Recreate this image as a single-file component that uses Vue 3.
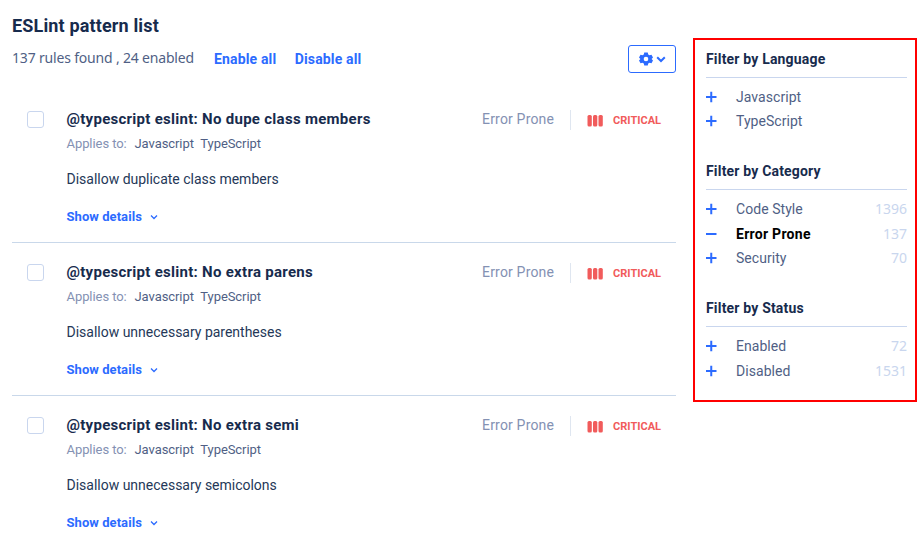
<script setup>
const rules = [
  { title: '@typescript eslint: No dupe class members', text: 'Disallow duplicate class members' },
  { title: '@typescript eslint: No extra parens', text: 'Disallow unnecessary parentheses' },
  { title: '@typescript eslint: No extra semi', text: 'Disallow unnecessary semicolons' },
]
const filters = [
  { title: 'Filter by Language', options: [{ name: 'Javascript' }, { name: 'TypeScript' }] },
  {
    title: 'Filter by Category',
    options: [
      { name: 'Code Style', count: 1396 },
      { name: 'Error Prone', count: 137, active: true },
      { name: 'Security', count: 70 },
    ],
  },
  { title: 'Filter by Status', options: [{ name: 'Enabled', count: 72 }, { name: 'Disabled', count: 1531 }] },
]
</script>

<template>
  <div class="page">
    <main class="main">
      <h1 class="heading">ESLint pattern list</h1>
      <div class="toolbar">
        <span class="summary">137 rules found , 24 enabled</span>
        <a class="link">Enable all</a>
        <a class="link">Disable all</a>
        <button class="settings" aria-label="Settings">
          <svg width="14" height="14" viewBox="0 0 24 24">
            <path fill="currentColor" fill-rule="evenodd" d="M9 1h6l.8 3.400 2.200 1.300 3.400-1 2.600 4.900-2.400 2.400 2.400 2.400-2.600 4.900-3.400-1-2.200 1.300L15 23H9l-.8-3.400L6 18.300l-3.400 1L0 14.400 2.400 12 0 9.600 2.600 4.700l3.400 1 2.200-1.300zM12 8a4 4 0 1 0 0 8 4 4 0 0 0 0-8z" />
          </svg>
          <svg width="10" height="7" viewBox="0 0 10 7">
            <path d="M1.200 1.200L5 5l3.800-3.800" fill="none" stroke="currentColor" stroke-width="2" />
          </svg>
        </button>
      </div>

      <article v-for="rule in rules" :key="rule.title" class="rule">
        <span class="checkbox"></span>
        <div class="body">
          <div class="top">
            <h2 class="title">{{ rule.title }}</h2>
            <span class="category">Error Prone</span>
            <span class="severity">
              <svg width="16" height="12" viewBox="0 0 16 12">
                <g fill="currentColor">
                  <rect x="0.500" y="0" width="4.300" height="11.500" rx="1.500" />
                  <rect x="6" y="0" width="4.300" height="11.500" rx="1.500" />
                  <rect x="11.500" y="0" width="4.300" height="11.500" rx="1.500" />
                </g>
              </svg>
              <span class="level">CRITICAL</span>
            </span>
          </div>
          <div class="applies">
            <span class="label">Applies to:</span>
            <span>Javascript</span>
            <span class="ts">TypeScript</span>
          </div>
          <p class="text">{{ rule.text }}</p>
          <a class="details">
            Show details
            <svg width="8" height="6" viewBox="0 0 8 6">
              <path d="M1 1.500l3 3 3-3" fill="none" stroke="currentColor" stroke-width="1.300" />
            </svg>
          </a>
        </div>
      </article>
    </main>

    <aside class="sidebar">
      <section v-for="group in filters" :key="group.title" class="group">
        <h3 class="group-title">{{ group.title }}</h3>
        <div v-for="option in group.options" :key="option.name" class="option" :class="{ active: option.active }">
          <svg class="sign" width="12" height="12" viewBox="0 0 12 12">
            <path :d="option.active ? 'M0 6h10.500' : 'M0 6h10.500M5.250 0.750v10.500'" stroke="currentColor" stroke-width="2" />
          </svg>
          <span class="name">{{ option.name }}</span>
          <span class="count">{{ option.count }}</span>
        </div>
      </section>
    </aside>
  </div>
</template>

<style>
body {
  background: #fff;
  overflow: hidden;
}
</style>

<style scoped>
.page {
  display: flex;
  align-items: flex-start;
  gap: 17px;
  width: 923px;
  height: 545px;
  overflow: hidden;
  box-sizing: border-box;
  padding-left: 12px;
  font-family: Roboto, sans-serif;
  font-size: 14px;
  color: #172b4d;
}
h1, h2, h3, p { margin: 0; }
.main {
  width: 664px;
  flex: none;
  padding-top: 14px;
}
.heading {
  font-size: 18px;
  line-height: 24px;
  letter-spacing: 0.150px;
}
.toolbar {
  display: flex;
  align-items: flex-start;
  height: 52px;
  padding-top: 7px;
  box-sizing: border-box;
}
.summary {
  width: 202px;
  font-family: "Noto Sans", sans-serif;
  line-height: 26px;
  letter-spacing: -0.180px;
  color: #505f85;
}
.link {
  font-weight: bold;
  line-height: 28px;
  letter-spacing: 0.150px;
  color: #2c6bff;
}
.link + .link { margin-left: 18.500px; }
.settings {
  display: flex;
  align-items: center;
  justify-content: center;
  gap: 3px;
  width: 48px;
  height: 28px;
  margin-left: auto;
  padding: 0;
  border: 1px solid #2c6bff;
  border-radius: 3px;
  background: #fff;
  color: #2c6bff;
}
.rule {
  display: flex;
  box-sizing: border-box;
  height: 153px;
  padding: 19px 15px 0;
  border-bottom: 1px solid #c9d8ea;
}
.checkbox {
  box-sizing: border-box;
  flex: none;
  width: 17px;
  height: 17px;
  margin: 2px 22.500px 0 0;
  border: 1px solid #c9d6ee;
  border-radius: 3px;
}
.body { flex: 1; }
.top {
  display: flex;
  align-items: center;
  height: 20px;
}
.title {
  flex: 1;
  font-size: 15px;
  line-height: 20px;
  letter-spacing: 0.280px;
  white-space: nowrap;
}
.category {
  line-height: 20px;
  padding-right: 16px;
  letter-spacing: 0.180px;
  color: #8491b3;
}
.severity {
  display: flex;
  align-items: center;
  gap: 10px;
  height: 20px;
  padding-left: 16px;
  margin-top: 2px;
  border-left: 1px solid #dfe6f0;
  color: #f15b5b;
}
.level {
  padding-top: 2px;
  font-size: 11px;
  font-weight: bold;
  line-height: 18px;
}
.severity svg { margin-top: 2px; }
.applies {
  display: flex;
  margin-top: 6px;
  font-size: 13px;
  line-height: 18px;
  letter-spacing: -0.070px;
  color: #505f85;
}
.label {
  width: 68px;
  color: #8491b3;
}
.applies .ts { margin-left: 6.500px; }
.text {
  margin-top: 16px;
  line-height: 20px;
  letter-spacing: -0.010px;
  color: #253858;
}
.details {
  display: flex;
  align-items: center;
  gap: 8px;
  margin-top: 19px;
  font-size: 13px;
  font-weight: bold;
  line-height: 18px;
  letter-spacing: 0.060px;
  color: #2c6bff;
}
.sidebar {
  box-sizing: border-box;
  width: 224px;
  height: 364px;
  margin-top: 38px;
  padding: 10px 8px 0 11px;
  border: 2px solid #f00;
}
.group { margin-bottom: 28.600px; }
.group-title {
  height: 27px;
  margin-bottom: 6.900px;
  border-bottom: 1px solid #c9d6ee;
  font-size: 14px;
  line-height: 18px;
  letter-spacing: 0.180px;
}
.group:last-child { padding-top: 0.400px; }
.option {
  display: flex;
  align-items: center;
  height: 24.400px;
  color: #505f85;
}
.sign {
  margin-right: 18px;
  color: #2c6bff;
}
.name { flex: 1; letter-spacing: 0.050px; }
.active .name {
  font-weight: bold;
  letter-spacing: 0.280px;
  color: #000;
}
.count {
  font-family: "Noto Sans", sans-serif;
  line-height: 20px;
  color: #c9d6ee;
}
</style>
